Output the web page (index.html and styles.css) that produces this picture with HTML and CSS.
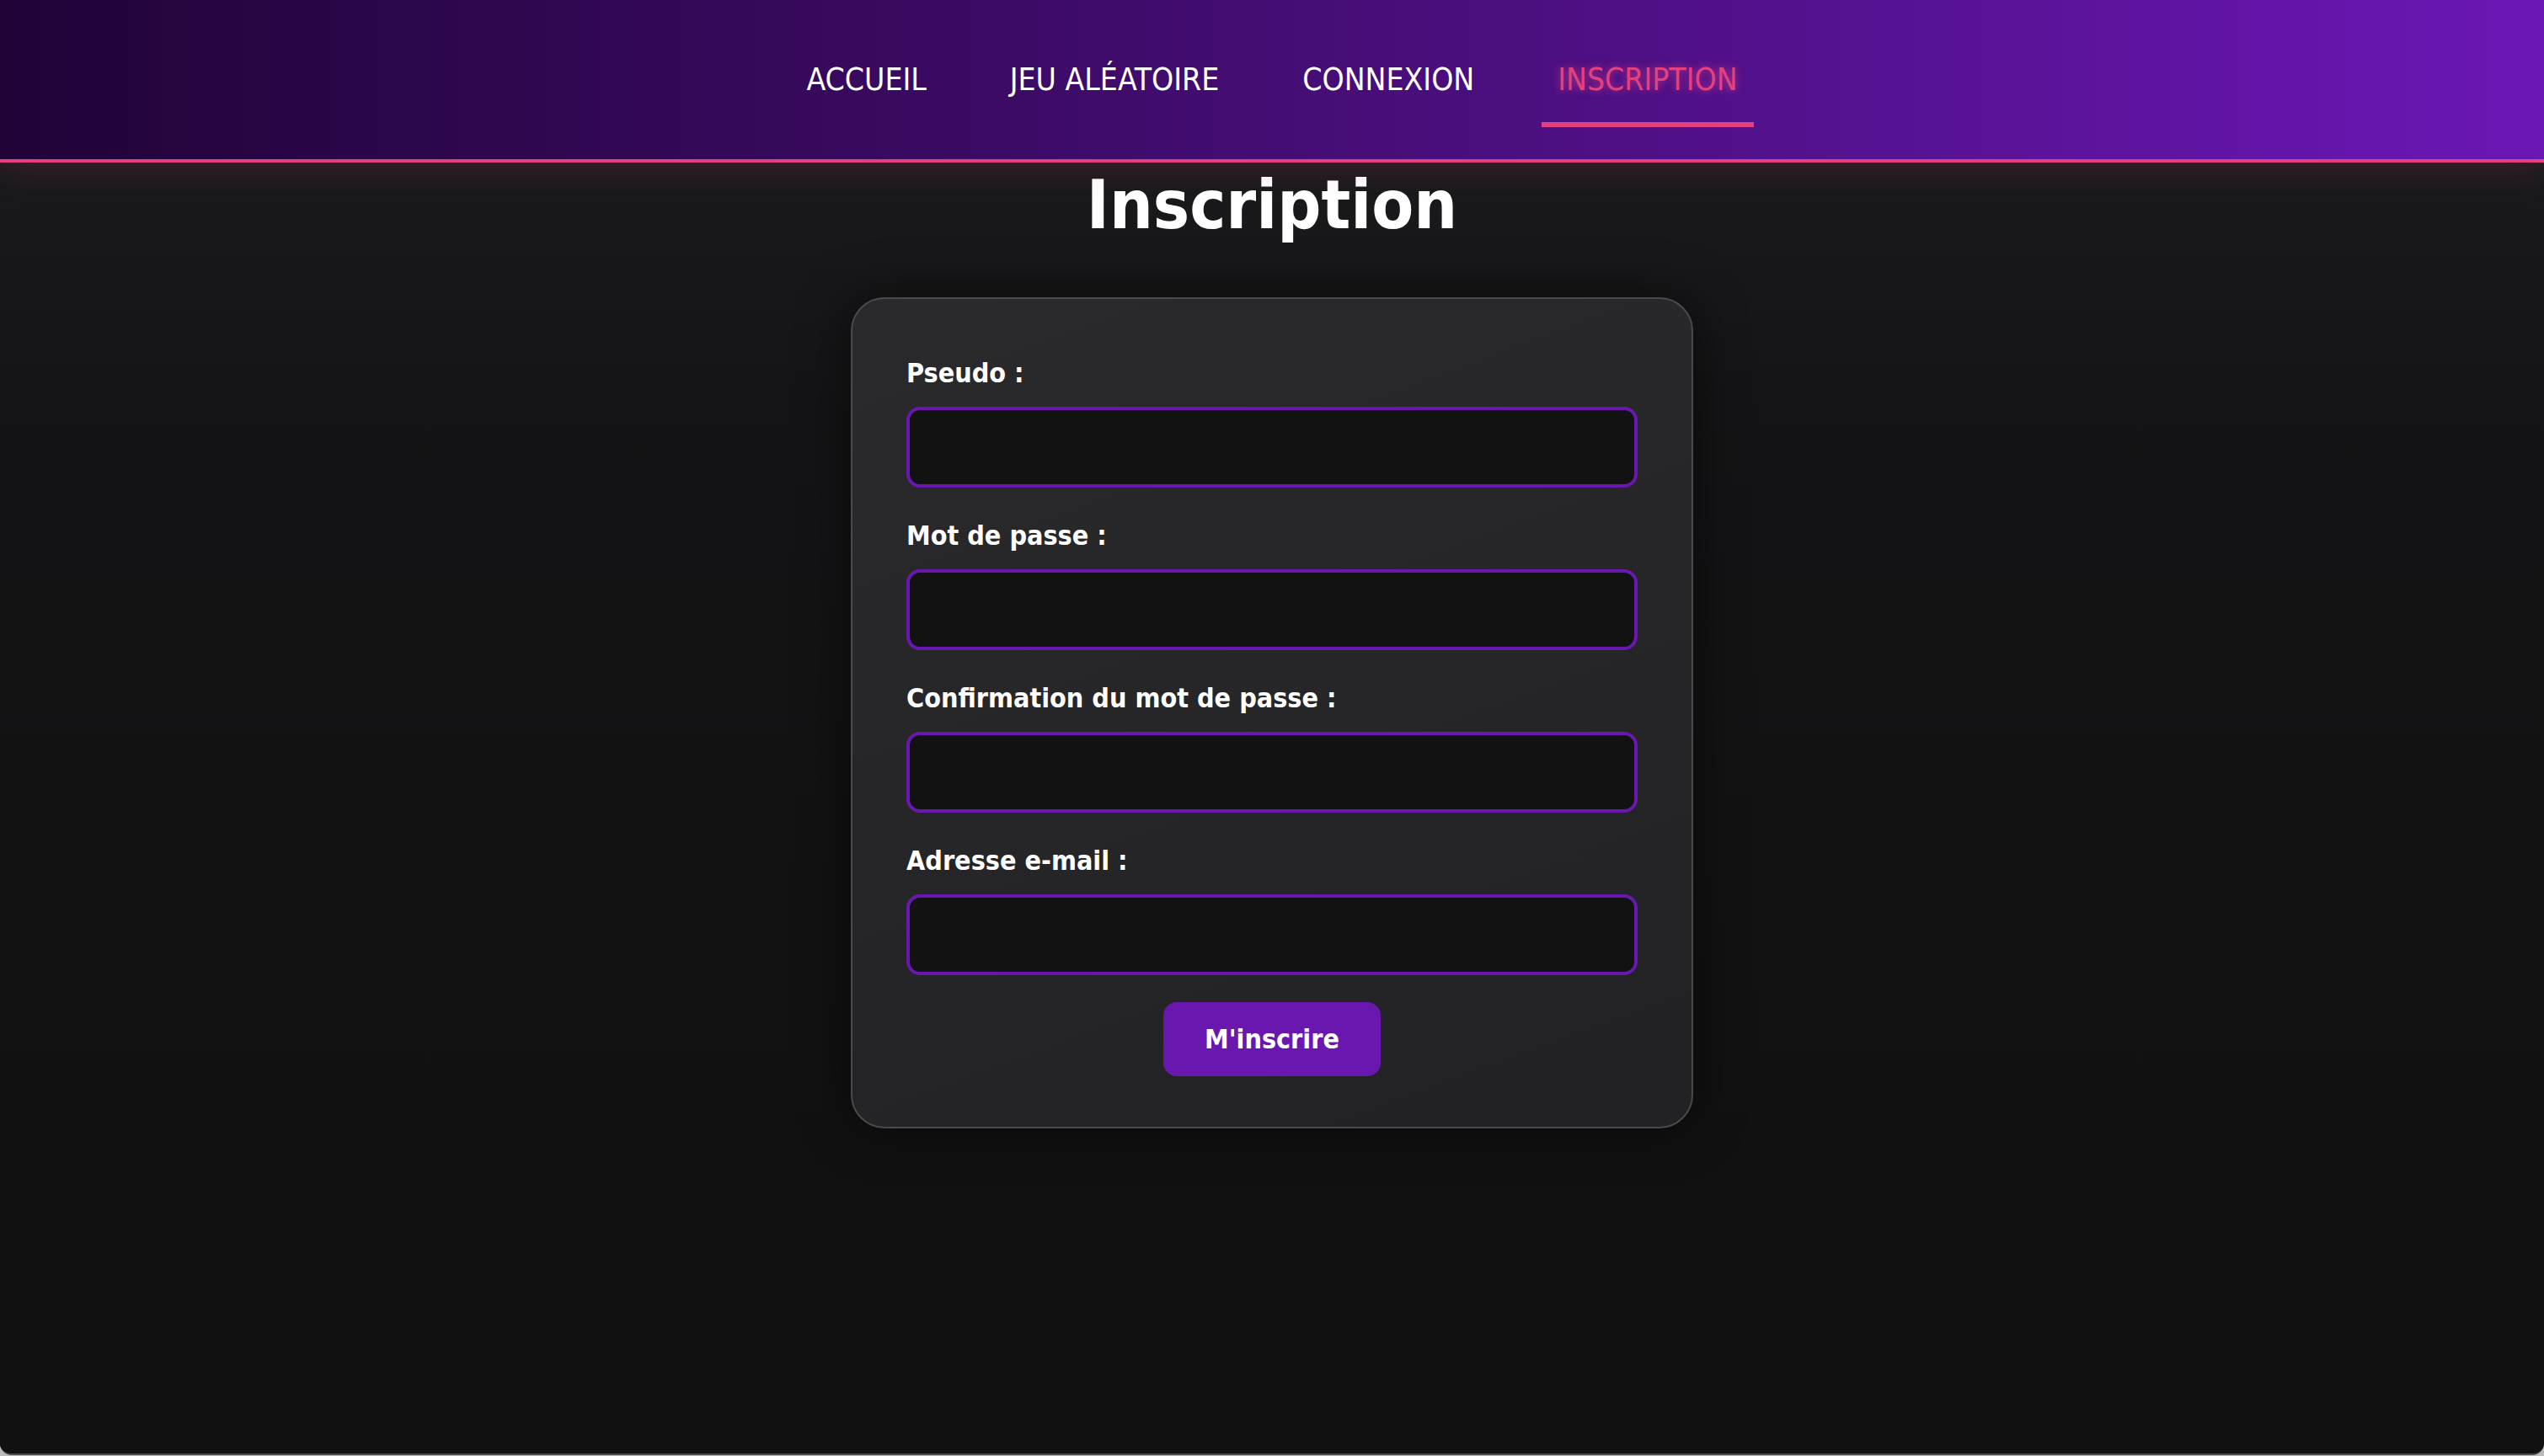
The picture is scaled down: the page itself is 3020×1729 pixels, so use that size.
FILE: index.html
```html
<!DOCTYPE html>
<html lang="fr">
<head>
<meta charset="utf-8">
<title>Inscription</title>
<link rel="stylesheet" href="styles.css">
</head>
<body>
<div class="page">
  <header class="site-header">
    <nav class="nav">
      <a class="nav-link" href="#">ACCUEIL</a>
      <a class="nav-link" href="#">JEU ALÉATOIRE</a>
      <a class="nav-link" href="#">CONNEXION</a>
      <a class="nav-link active" href="#">INSCRIPTION</a>
    </nav>
  </header>
  <main class="main">
    <h1 class="title">Inscription</h1>
    <form class="card">
      <div class="field">
        <label class="label" for="pseudo">Pseudo :</label>
        <input class="input" id="pseudo" type="text">
      </div>
      <div class="field">
        <label class="label" for="mdp">Mot de passe :</label>
        <input class="input" id="mdp" type="password">
      </div>
      <div class="field">
        <label class="label" for="mdp2">Confirmation du mot de passe :</label>
        <input class="input" id="mdp2" type="password">
      </div>
      <div class="field">
        <label class="label" for="mail">Adresse e-mail :</label>
        <input class="input" id="mail" type="email">
      </div>
      <div class="actions">
        <button class="btn" type="button">M'inscrire</button>
      </div>
    </form>
  </main>
</div>
</body>
</html>
```
FILE: styles.css
```css
html {
  background: #bcbcbc;
}
body {
  margin: 0;
  font-family: "DejaVu Sans Condensed", "DejaVu Sans", sans-serif;
  color: #fff;
}
.page {
  height: 1726px;
  background: #111111;
  border-bottom: 2px solid #4d4d4d;
  border-radius: 0 0 14px 14px;
  overflow: hidden;
}
.site-header {
  height: 189px;
  background: linear-gradient(90deg, #210338 0%, #3c0b66 40%, #6b17b5 100%);
  border-bottom: 4px solid #e3407f;
  box-shadow: 0 6px 40px rgba(227, 64, 127, 0.18);
  position: relative;
  z-index: 1;
}
.nav {
  display: flex;
  justify-content: center;
  gap: 61px;
  padding-top: 72px;
}
.nav-link {
  display: block;
  font-size: 37px;
  line-height: 45px;
  color: #fff;
  text-decoration: none;
  padding: 0 19px 28px;
  border-bottom: 6px solid transparent;
}
.nav-link.active {
  color: #e3407f;
  border-bottom-color: #e3407f;
  text-shadow: 0 0 10px rgba(227, 64, 127, 0.75);
}
.main {
  background: linear-gradient(180deg, #1a1a1c 0px, #141416 300px, #111111 1200px);
  height: 1533px;
}
.title {
  margin: 0;
  padding-top: 2px;
  height: 160px;
  box-sizing: border-box;
  font-size: 81px;
  line-height: 96px;
  font-weight: bold;
  text-align: center;
  color: #fff;
}
.card {
  width: 1000px;
  box-sizing: border-box;
  margin: 0 auto;
  padding: 68px 64px 60px;
  border: 2px solid #4a4a4c;
  border-radius: 40px;
  background: linear-gradient(160deg, #2a2a2c 0%, #222224 100%);
  box-shadow: 0 0 60px rgba(0, 0, 0, 0.55);
  display: flex;
  flex-direction: column;
}
.field {
  display: flex;
  flex-direction: column;
}
.field + .field {
  margin-top: 37px;
}
.label {
  font-size: 32px;
  line-height: 40px;
  font-weight: bold;
  margin-bottom: 20px;
}
.input {
  height: 96px;
  box-sizing: border-box;
  border: 4px solid #6a17b0;
  border-radius: 16px;
  background: #121212;
  color: #fff;
  font-size: 32px;
  padding: 0 20px;
  outline: none;
}
.actions {
  display: flex;
  justify-content: center;
  margin-top: 32px;
}
.btn {
  width: 258px;
  height: 88px;
  border: none;
  border-radius: 16px;
  background: #6a17b0;
  color: #fff;
  font-family: inherit;
  font-size: 32px;
  font-weight: bold;
}
```
